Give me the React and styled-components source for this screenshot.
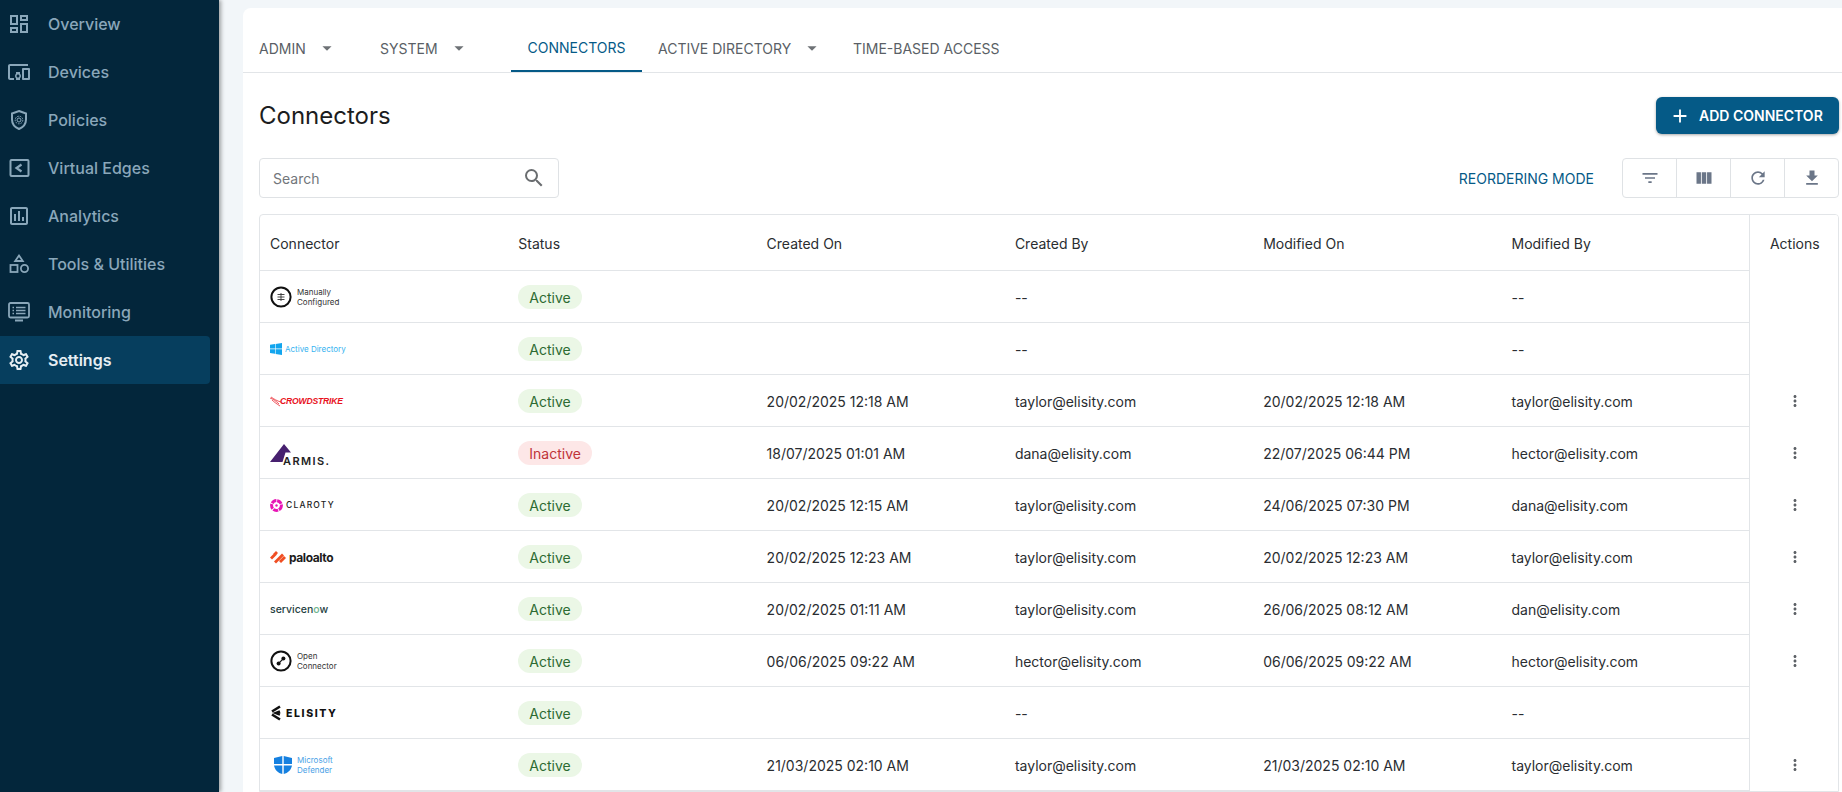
import React from "react";
import styled, { createGlobalStyle } from "styled-components";
import {
  MdAdd,
  MdArrowDropDown,
  MdFileDownload,
  MdFilterList,
  MdMoreVert,
  MdOutlineAssessment,
  MdOutlineDashboard,
  MdOutlineDevicesOther,
  MdOutlineSettings,
  MdRefresh,
  MdSearch,
  MdViewColumn,
} from "react-icons/md";

const GlobalStyle = createGlobalStyle`
  html, body {
    margin: 0;
    height: 792px;
    overflow: hidden;
    background: #f2f6f9;
    font-family: Inter, "Liberation Sans", sans-serif;
    color: #1f2328;
  }
`;

const Page = styled.div`
  display: flex;
  height: 792px;
  overflow: hidden;
`;

const Sidebar = styled.nav`
  flex: 0 0 219px;
  background: #03263b;
  box-shadow: 2px 0 4px rgba(0, 0, 0, 0.35);
  z-index: 1;
`;

const NavItem = styled.div`
  display: flex;
  align-items: center;
  height: 48px;
  width: 210px;
  padding-left: 7px;
  box-sizing: border-box;
  gap: 17px;
  border-radius: 0 4px 4px 0;
  font-size: 16px;
  font-weight: ${(p) => (p.$active ? 600 : 500)};
  color: ${(p) => (p.$active ? "#e6eef3" : "#8aa7ba")};
  background: ${(p) => (p.$active ? "#063e5e" : "transparent")};
  svg {
    flex: 0 0 24px;
    width: 24px;
    height: 24px;
    color: ${(p) => (p.$active ? "#e6eef3" : "#8aa7ba")};
  }
`;

const Main = styled.main`
  flex: 1;
  padding: 8px 0 0 24px;
  min-width: 0;
`;

const Panel = styled.div`
  background: #fff;
  height: 784px;
  border-radius: 8px 0 0 0;
`;

const Tabs = styled.div`
  display: flex;
  height: 64px;
  padding: 0 0 0 16px;
  border-bottom: 1px solid #e2e5e8;
  box-sizing: content-box;
`;

const Tab = styled.div`
  display: flex;
  align-items: center;
  height: 64px;
  box-sizing: border-box;
  padding: 16px 0 0;
  width: ${(p) => p.$width}px;
  justify-content: ${(p) => (p.$active ? "center" : "flex-start")};
  font-size: 14px;
  letter-spacing: 0;
  color: ${(p) => (p.$active ? "#055a87" : "#5a5f66")};
  border-bottom: ${(p) => (p.$active ? "2px solid #055a87" : "none")};
  svg {
    width: 22px;
    height: 22px;
    color: #6e7276;
    margin-left: 10px;
  }
`;

const TitleRow = styled.div`
  display: flex;
  justify-content: space-between;
  align-items: center;
  padding: 24px 3px 0 16px;
  height: 37px;
`;

const Title = styled.h1`
  margin: 0;
  font-size: 24px;
  font-weight: 400;
  color: #1b1d20;
`;

const AddButton = styled.button`
  display: flex;
  align-items: center;
  gap: 8px;
  height: 37px;
  width: 183px;
  padding: 0 0 0 13px;
  border: 0;
  border-radius: 6px;
  background: #055a87;
  color: #fff;
  font: 600 14px Inter, sans-serif;
  box-shadow: 0 1px 3px rgba(0, 0, 0, 0.35);
  svg {
    width: 22px;
    height: 22px;
  }
`;

const ToolRow = styled.div`
  display: flex;
  justify-content: space-between;
  align-items: center;
  padding: 24px 3px 0 16px;
`;

const SearchBox = styled.div`
  display: flex;
  align-items: center;
  justify-content: space-between;
  width: 300px;
  height: 40px;
  box-sizing: border-box;
  padding: 0 12px 0 13px;
  border: 1px solid #dfe2e5;
  border-radius: 4px;
  font-size: 14px;
  color: #72767b;
  svg {
    width: 24px;
    height: 24px;
    color: #6a6d70;
  }
`;

const ToolGroup = styled.div`
  display: flex;
  align-items: center;
`;

const ReorderLink = styled.span`
  margin-right: 28px;
  font-size: 14px;
  font-weight: 400;
  color: #055a87;
`;

const IconGroup = styled.div`
  display: flex;
  height: 40px;
  box-sizing: border-box;
  border: 1px solid #dfe2e5;
  border-radius: 4px;
`;

const IconCell = styled.div`
  display: flex;
  align-items: center;
  justify-content: center;
  width: 53px;
  & + & {
    border-left: 1px solid #dfe2e5;
  }
  svg {
    width: 20px;
    height: 20px;
    color: #6b7688;
  }
`;

const TableBox = styled.div`
  margin: 16px 3px 0 16px;
  border: 1px solid #e2e5e8;
  border-radius: 4px 4px 0 0;
  overflow: hidden;
`;

const Row = styled.div`
  display: grid;
  grid-template-columns: repeat(6, 248.3px) 90px;
  height: ${(p) => (p.$head ? 56 : 52)}px;
  box-sizing: border-box;
  box-shadow: inset 0 -1px 0 #e2e5e8;
`;

const Cell = styled.div`
  display: flex;
  align-items: center;
  padding-left: 10px;
  font-size: 14px;
  font-weight: 400;
  color: #2a2d31;
`;

const ActionCell = styled.div`
  display: flex;
  align-items: center;
  justify-content: center;
  margin-left: -1px;
  border-left: 1px solid #e2e5e8;
  background: #fff;
  font-size: 14px;
  color: #2a2d31;
  svg {
    width: 18px;
    height: 18px;
    color: #5d6166;
  }
`;

const Pill = styled.span`
  display: inline-flex;
  align-items: center;
  height: 24px;
  padding: 0 11px;
  border-radius: 12px;
  font-size: 14px;
  background: ${(p) => (p.$off ? "#fde7e7" : "#ebf7e6")};
  color: ${(p) => (p.$off ? "#c0343a" : "#2c6b33")};
`;

const LogoWrap = styled.div`
  display: flex;
  align-items: center;
  gap: ${(p) => p.$gap || 5}px;
  width: 70px;
  height: 24px;
  svg {
    flex: none;
  }
`;

const StackText = styled.span`
  font-size: 8px;
  line-height: 10px;
  color: ${(p) => p.$color || "#333"};
  white-space: nowrap;
`;

const CrowdText = styled.span`
  font: italic 900 8.6px "Liberation Sans", sans-serif;
  letter-spacing: -0.2px;
  color: #e8121d;
  margin-left: -7px;
`;

const ArmisText = styled.span`
  position: absolute;
  left: 13px;
  top: 13px;
  font-size: 11px;
  font-weight: 600;
  letter-spacing: 1.4px;
  color: #222;
`;

const ClarotyText = styled.span`
  font-size: 8.5px;
  font-weight: 500;
  letter-spacing: 1.2px;
  color: #222;
`;

const PaloText = styled.span`
  font-size: 12px;
  font-weight: 700;
  letter-spacing: -0.4px;
  color: #1b1b1b;
`;

const NowText = styled.span`
  font-size: 10.5px;
  font-weight: 500;
  color: #25413f;
  b {
    font-weight: 500;
    color: #6fb58f;
  }
`;

const ElisityText = styled.span`
  font-size: 10.5px;
  font-weight: 800;
  letter-spacing: 1.6px;
  color: #111;
`;

const ArmisBox = styled(LogoWrap)`
  position: relative;
`;

const DefenderBox = styled(LogoWrap)`
  padding-left: 4px;
  width: 66px;
`;

const ShieldIcon = () => (
  <svg viewBox="0 0 24 24" fill="none" stroke="currentColor" strokeWidth="2">
    <path d="M12 3l7 2.5v6c0 4.5-3 7.8-7 9.5-4-1.7-7-5-7-9.5v-6z" />
    <circle cx="12" cy="12" r="2" strokeWidth="1" />
    <circle cx="12" cy="12" r="3.8" strokeWidth="1" strokeDasharray="1.6 1" />
  </svg>
);

const EdgeIcon = () => (
  <svg viewBox="0 0 24 24" fill="none" stroke="currentColor" strokeWidth="2">
    <rect x="3.5" y="4" width="18" height="16" rx="1" />
    <path d="M14.5 8.5L9.5 12l5 3.5" strokeWidth="2.2" />
  </svg>
);

const ToolsIcon = () => (
  <svg viewBox="0 0 24 24" fill="none" stroke="currentColor" strokeWidth="1.8">
    <path d="M12 3.5l3.8 5.5H8.2z" />
    <rect x="3.5" y="13" width="7" height="7" />
    <circle cx="17.5" cy="16.5" r="3.6" />
  </svg>
);

const MonitorIcon = () => (
  <svg viewBox="0 0 24 24" fill="none" stroke="currentColor" strokeWidth="1.8">
    <rect x="2" y="3" width="20" height="14.5" rx="1.5" />
    <path d="M8 20.5h8" strokeWidth="2" />
    <path d="M5.5 7.5h1.5M9 7.5h9.5M5.5 10.5h1.5M9 10.5h9.5M5.5 13.5h1.5M9 13.5h9.5" strokeWidth="1.4" />
  </svg>
);

const navItems = [
  ["Overview", <MdOutlineDashboard key="o" />],
  ["Devices", <MdOutlineDevicesOther key="d" />],
  ["Policies", <ShieldIcon key="p" />],
  ["Virtual Edges", <EdgeIcon key="v" />],
  ["Analytics", <MdOutlineAssessment key="a" />],
  ["Tools & Utilities", <ToolsIcon key="t" />],
  ["Monitoring", <MonitorIcon key="m" />],
  ["Settings", <MdOutlineSettings key="s" />],
];

const RingIcon = ({ children }) => (
  <svg width="22" height="22" viewBox="0 0 22 22" fill="none">
    <circle cx="11" cy="11" r="9.6" stroke="#111" strokeWidth="2" />
    {children}
  </svg>
);

const logos = {
  manual: (
    <LogoWrap>
      <RingIcon>
        <path d="M7.5 8.5h7M7.5 11h7M7.5 13.5h7M11 7v8" stroke="#333" strokeWidth="0.9" />
      </RingIcon>
      <StackText>
        Manually
        <br />
        Configured
      </StackText>
    </LogoWrap>
  ),
  ad: (
    <LogoWrap $gap={3}>
      <svg width="12" height="12" viewBox="0 0 12 12" fill="#12a5ee">
        <path d="M0 1.8l5-.8v4.6H0zM5.6.9L12 0v5.6H5.6zM0 6.2h5v4.6l-5-.8zM5.6 6.2H12V12l-6.4-.9z" />
      </svg>
      <StackText $color="#35b2f0">Active Directory</StackText>
    </LogoWrap>
  ),
  crowd: (
    <LogoWrap $gap={0}>
      <svg width="12" height="12" viewBox="0 0 12 12" fill="none" stroke="#e8121d" strokeWidth="0.7">
        <path d="M0 3c3 1 6 3 9 6M1 2c3 2 6 4 10 5M2 5c2 2 5 4 8 6" />
      </svg>
      <CrowdText>CROWDSTRIKE</CrowdText>
    </LogoWrap>
  ),
  armis: (
    <ArmisBox>
      <svg width="21" height="19" viewBox="0 0 21 19">
        <path d="M0 18L14 0l7 8.5-5.5 0-3 9.5z" fill="#47206f" />
      </svg>
      <ArmisText>ARMIS.</ArmisText>
    </ArmisBox>
  ),
  claroty: (
    <LogoWrap $gap={3}>
      <svg width="13" height="13" viewBox="0 0 13 13" fill="none" stroke="#e815b5">
        <circle cx="6.5" cy="6.5" r="4.9" strokeWidth="3" strokeDasharray="5 0.8" />
        <circle cx="6.5" cy="6.5" r="1.2" fill="#e815b5" strokeWidth="0" />
      </svg>
      <ClarotyText>CLAROTY</ClarotyText>
    </LogoWrap>
  ),
  palo: (
    <LogoWrap $gap={3}>
      <svg width="16" height="13" viewBox="0 0 16 13" fill="#f04e23">
        <path d="M0 6.5L5 1.5l2 2-5 5zM4 10.5l8-8 2 2-8 8zM9 10l5-5 2 2-5 5zM3 3l3-3 2 2-3 3z" />
      </svg>
      <PaloText>paloalto</PaloText>
    </LogoWrap>
  ),
  now: (
    <LogoWrap>
      <NowText>
        servicen<b>o</b>w
      </NowText>
    </LogoWrap>
  ),
  open: (
    <LogoWrap>
      <RingIcon>
        <circle cx="8.6" cy="13.4" r="2" fill="#111" />
        <circle cx="13.4" cy="8.6" r="2" fill="#111" />
        <path d="M8.6 13.4l4.8-4.8" stroke="#111" strokeWidth="1.2" />
      </RingIcon>
      <StackText>
        Open
        <br />
        Connector
      </StackText>
    </LogoWrap>
  ),
  elisity: (
    <LogoWrap $gap={5}>
      <svg width="11" height="16" viewBox="0 0 11 16" fill="none" stroke="#111" strokeWidth="2.6">
        <path d="M10 1.5L2 6.5M2 9.5l8 5M10 6.5L6 8l4 1.5" />
      </svg>
      <ElisityText>ELISITY</ElisityText>
    </LogoWrap>
  ),
  defender: (
    <DefenderBox>
      <svg width="18" height="18" viewBox="0 0 18 18">
        <path d="M0 2l8.3-2v8H0zM9.7 0L18 2v6H9.7zM0 9.5h8.3V18C4 17 .8 14 0 9.5zM9.7 9.5H18C17.2 14 14 17 9.7 18z" fill="#1580e0" />
      </svg>
      <StackText $color="#4a9fe6">
        Microsoft
        <br />
        Defender
      </StackText>
    </DefenderBox>
  ),
};

const rows = [
  { logo: "manual", createdBy: "--", modifiedBy: "--" },
  { logo: "ad", createdBy: "--", modifiedBy: "--" },
  { logo: "crowd", created: "20/02/2025 12:18 AM", createdBy: "taylor@elisity.com", modified: "20/02/2025 12:18 AM", modifiedBy: "taylor@elisity.com", menu: true },
  { logo: "armis", off: true, created: "18/07/2025 01:01 AM", createdBy: "dana@elisity.com", modified: "22/07/2025 06:44 PM", modifiedBy: "hector@elisity.com", menu: true },
  { logo: "claroty", created: "20/02/2025 12:15 AM", createdBy: "taylor@elisity.com", modified: "24/06/2025 07:30 PM", modifiedBy: "dana@elisity.com", menu: true },
  { logo: "palo", created: "20/02/2025 12:23 AM", createdBy: "taylor@elisity.com", modified: "20/02/2025 12:23 AM", modifiedBy: "taylor@elisity.com", menu: true },
  { logo: "now", created: "20/02/2025 01:11 AM", createdBy: "taylor@elisity.com", modified: "26/06/2025 08:12 AM", modifiedBy: "dan@elisity.com", menu: true },
  { logo: "open", created: "06/06/2025 09:22 AM", createdBy: "hector@elisity.com", modified: "06/06/2025 09:22 AM", modifiedBy: "hector@elisity.com", menu: true },
  { logo: "elisity", createdBy: "--", modifiedBy: "--" },
  { logo: "defender", created: "21/03/2025 02:10 AM", createdBy: "taylor@elisity.com", modified: "21/03/2025 02:10 AM", modifiedBy: "taylor@elisity.com", menu: true },
];

const headers = ["Connector", "Status", "Created On", "Created By", "Modified On", "Modified By"];

export default function App() {
  return (
    <>
      <GlobalStyle />
      <Page>
        <Sidebar>
          {navItems.map(([label, icon]) => (
            <NavItem key={label} $active={label === "Settings"}>
              {icon}
              {label}
            </NavItem>
          ))}
        </Sidebar>
        <Main>
          <Panel>
            <Tabs>
              <Tab $width={121}>
                ADMIN
                <MdArrowDropDown />
              </Tab>
              <Tab $width={131}>
                SYSTEM
                <MdArrowDropDown />
              </Tab>
              <Tab $width={131} $active>
                CONNECTORS
              </Tab>
              <Tab $width={211} style={{ paddingLeft: 16 }}>
                ACTIVE DIRECTORY
                <MdArrowDropDown />
              </Tab>
              <Tab $width={170}>TIME-BASED ACCESS</Tab>
            </Tabs>
            <TitleRow>
              <Title>Connectors</Title>
              <AddButton>
                <MdAdd />
                ADD CONNECTOR
              </AddButton>
            </TitleRow>
            <ToolRow>
              <SearchBox>
                Search
                <MdSearch />
              </SearchBox>
              <ToolGroup>
                <ReorderLink>REORDERING MODE</ReorderLink>
                <IconGroup>
                  <IconCell>
                    <MdFilterList />
                  </IconCell>
                  <IconCell>
                    <MdViewColumn />
                  </IconCell>
                  <IconCell>
                    <MdRefresh />
                  </IconCell>
                  <IconCell>
                    <MdFileDownload />
                  </IconCell>
                </IconGroup>
              </ToolGroup>
            </ToolRow>
            <TableBox>
              <Row $head>
                {headers.map((h) => (
                  <Cell key={h}>{h}</Cell>
                ))}
                <ActionCell>Actions</ActionCell>
              </Row>
              {rows.map((r) => (
                <Row key={r.logo}>
                  <Cell>{logos[r.logo]}</Cell>
                  <Cell>
                    <Pill $off={r.off}>{r.off ? "Inactive" : "Active"}</Pill>
                  </Cell>
                  <Cell>{r.created}</Cell>
                  <Cell>{r.createdBy}</Cell>
                  <Cell>{r.modified}</Cell>
                  <Cell>{r.modifiedBy}</Cell>
                  <ActionCell>{r.menu && <MdMoreVert />}</ActionCell>
                </Row>
              ))}
            </TableBox>
          </Panel>
        </Main>
      </Page>
    </>
  );
}
